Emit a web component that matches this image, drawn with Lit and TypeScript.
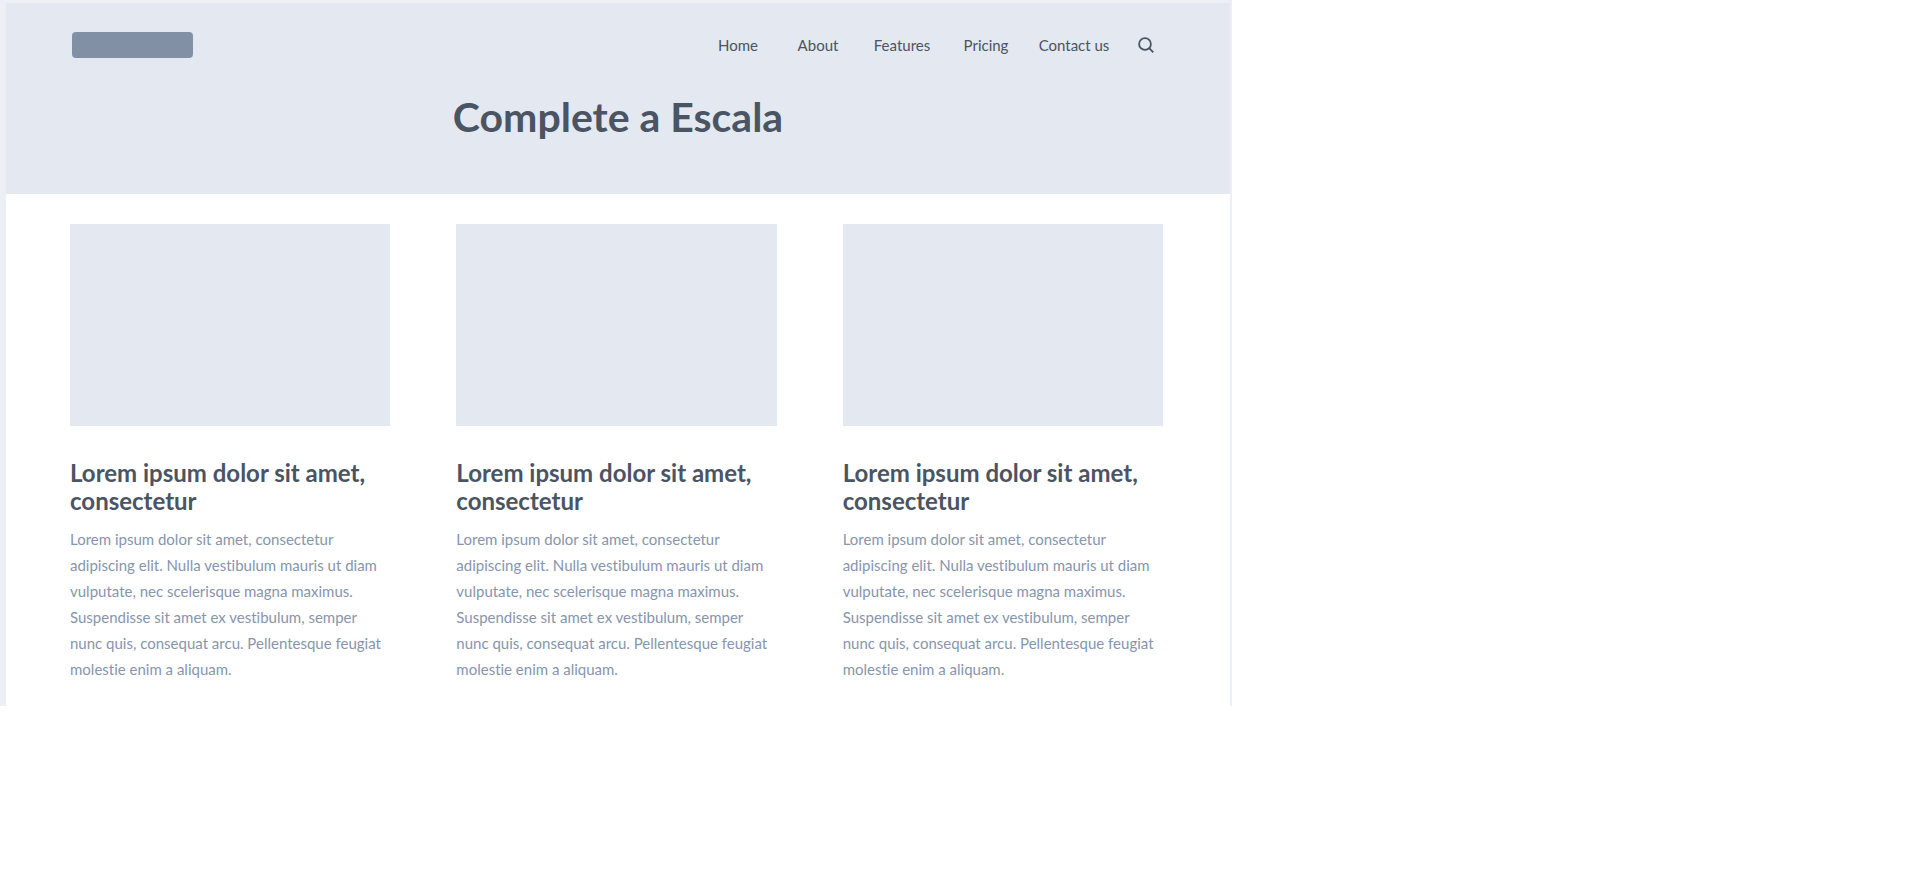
import { LitElement, html, css } from "lit";
import { customElement } from "lit/decorators.js";

const LINKS = ["Home", "About", "Features", "Pricing", "Contact us"];

const CARDS = [1, 2, 3].map(() => ({
  title: "Lorem ipsum dolor sit amet, consectetur",
  text:
    "Lorem ipsum dolor sit amet, consectetur adipiscing elit. Nulla vestibulum mauris ut diam vulputate, nec scelerisque magna maximus. Suspendisse sit amet ex vestibulum, semper nunc quis, consequat arcu. Pellentesque feugiat molestie enim a aliquam.",
}));

@customElement("app-root")
export class AppRoot extends LitElement {
  static styles = css`
    :host {
      display: block;
      font-family: Lato, sans-serif;
      font-size: 15px;
      font-variant-ligatures: none;
      color: #4a5462;
      background: #fff;
    }
    .page {
      box-sizing: border-box;
      max-width: 1232px;
      border: solid #eceff5;
      border-width: 3px 2px 0 6px;
      padding-bottom: 24px;
    }
    .hero {
      background: #e4e8f1;
      padding: 29px 66px 51px;
    }
    .bar {
      display: flex;
      align-items: center;
      justify-content: space-between;
      flex-wrap: wrap;
      gap: 16px;
    }
    .logo {
      display: block;
      width: 121px;
      height: 26px;
      border-radius: 4px;
      background: #8290a6;
    }
    .tools {
      display: flex;
      align-items: center;
      gap: 16px;
      padding-right: 8px;
    }
    .links {
      display: grid;
      grid-template-columns: 76px repeat(3, 84px) 92px;
      margin: 0;
      padding: 0;
      list-style: none;
      text-align: center;
      line-height: 24px;
    }
    .links a {
      color: inherit;
      text-decoration: none;
    }
    .search {
      display: block;
      border: 0;
      padding: 2px;
      background: none;
      color: inherit;
      cursor: pointer;
    }
    .icon {
      display: block;
      width: 16px;
      height: 16px;
    }
    h1 {
      margin: 33px 0 0;
      text-align: center;
      font-size: 41px;
      line-height: 52px;
      font-weight: 700;
    }
    .cards {
      display: grid;
      grid-template-columns: repeat(auto-fit, minmax(260px, 1fr));
      gap: 66px;
      padding: 30px 67px 0 64px;
    }
    .media {
      height: 202px;
      background: #e4e8f1;
    }
    h2 {
      margin: 33px 0 0;
      font-size: 24px;
      line-height: 28px;
      font-weight: 700;
    }
    p {
      margin: 11px 0 0;
      line-height: 26px;
      color: #8795ad;
    }
  `;

  render() {
    return html`
      <div class="page">
        <header class="hero">
          <div class="bar">
            <a class="logo" href="#" aria-label="Start page"></a>
            <div class="tools">
              <nav>
                <ul class="links">
                  ${LINKS.map((l) => html`<li><a href="#">${l}</a></li>`)}
                </ul>
              </nav>
              <button class="search" type="button" aria-label="Search">
                <svg class="icon" viewBox="0 0 16 16" fill="none" stroke="currentColor" stroke-width="1.8">
                  <circle cx="7" cy="7" r="5.9" />
                  <path d="M11.2 11.2 15.3 15.3" />
                </svg>
              </button>
            </div>
          </div>
          <h1>Complete a Escala</h1>
        </header>
        <main class="cards">
          ${CARDS.map(
            (c) => html`
              <article>
                <div class="media"></div>
                <h2>${c.title}</h2>
                <p>${c.text}</p>
              </article>
            `
          )}
        </main>
      </div>
    `;
  }
}
